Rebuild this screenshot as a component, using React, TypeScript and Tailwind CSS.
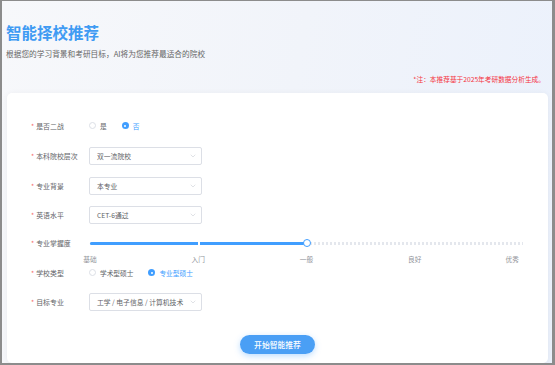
import { ChevronDown } from 'lucide-react';

const FONT = { fontFamily: '"Noto Sans CJK SC", "Noto Sans", sans-serif' };

function Label({ text }: { text: string }) {
  return (
    <div className="w-[58px] shrink-0 flex items-center text-[6.9px] text-[#606266]">
      <span className="text-[#f56c6c] mr-[2px]">*</span>
      {text}
    </div>
  );
}

function Select({ value }: { value: string }) {
  return (
    <div className="w-[113px] h-[18px] border border-[#dcdfe6] rounded-[2px] bg-white flex items-center justify-between pl-[7px] pr-[4px] text-[6.8px] text-[#606266]">
      <span>{value}</span>
      <ChevronDown size={8} strokeWidth={1.5} color="#c0c4cc" />
    </div>
  );
}

function Radio({ label, checked }: { label: string; checked?: boolean }) {
  return (
    <div className="flex items-center mr-[15px]">
      {checked ? (
        <span className="w-[7px] h-[7px] rounded-full bg-[#409eff] flex items-center justify-center">
          <span className="w-[2.5px] h-[2.5px] rounded-full bg-white" />
        </span>
      ) : (
        <span className="w-[7px] h-[7px] rounded-full border border-[#dcdfe6] bg-white" />
      )}
      <span className={`ml-[4px] text-[6.7px] ${checked ? 'text-[#409eff]' : 'text-[#606266]'}`}>{label}</span>
    </div>
  );
}

const MARKS = [
  { label: '基础', left: '0%' },
  { label: '入门', left: '25%' },
  { label: '一般', left: '50%' },
  { label: '良好', left: '75%' },
  { label: '优秀', left: '97.5%' },
];

export default function App() {
  return (
    <div
      style={FONT}
      className="w-[555px] h-[365px] overflow-hidden border-l-2 border-r-[3px] border-t border-b-2 border-[#8c8c8c] bg-[linear-gradient(100deg,#f7f8fb_0%,#f1f4fa_50%,#ebf1fc_100%)] flex flex-col"
    >
      <div className="pl-[4px] pt-[21px]">
        <h1 className="text-[15.5px] leading-[20px] font-bold text-[#3f9bf3]">智能择校推荐</h1>
        <p className="mt-[7px] text-[7.7px] leading-[10px] text-[#666]">根据您的学习背景和考研目标，AI将为您推荐最适合的院校</p>
      </div>
      <p className="mt-[15px] pr-[7px] text-right text-[6.7px] leading-[10px] text-[#f5333f]">*注：本推荐基于2025年考研数据分析生成。</p>

      <div className="mt-[9px] ml-[5px] mr-[4px] flex-1 bg-white rounded-[5px] shadow-[0_1px_6px_rgba(0,0,0,0.06)] pl-[24px] pt-[24px]">
        <div className="flex h-[18px] items-center">
          <Label text="是否二战" />
          <Radio label="是" />
          <Radio label="否" checked />
        </div>
        <div className="flex h-[18px] items-center mt-[12px]">
          <Label text="本科院校层次" />
          <Select value="双一流院校" />
        </div>
        <div className="flex h-[18px] items-center mt-[12px]">
          <Label text="专业背景" />
          <Select value="本专业" />
        </div>
        <div className="flex h-[18px] items-center mt-[11px]">
          <Label text="英语水平" />
          <Select value="CET-6通过" />
        </div>
        <div className="flex h-[18px] items-center mt-[10px]">
          <Label text="专业掌握度" />
          <div className="relative w-[433px] ml-[1px] h-[18px]">
            <div className="absolute left-0 right-0 top-[7.5px] h-[3px] bg-[repeating-linear-gradient(90deg,#e4e7ed_0_2px,transparent_2px_4px)]" />
            <div className="absolute left-0 w-1/2 top-[7.5px] h-[3px] bg-[#409eff] rounded-l-full" />
            <div className="absolute left-1/4 top-[7.5px] h-[3px] w-[2px] bg-white" />
            <div className="absolute left-1/2 top-[5px] -translate-x-1/2 w-[8px] h-[8px] rounded-full border-[1.5px] border-[#409eff] bg-white" />
            {MARKS.map(m => (
              <span
                key={m.label}
                style={{ left: m.left }}
                className="absolute top-[20px] -translate-x-1/2 text-[6.7px] leading-[10px] text-[#909399] whitespace-nowrap"
              >
                {m.label}
              </span>
            ))}
          </div>
        </div>
        <div className="flex h-[18px] items-center mt-[12px]">
          <Label text="学校类型" />
          <Radio label="学术型硕士" />
          <Radio label="专业型硕士" checked />
        </div>
        <div className="flex h-[18px] items-center mt-[11px]">
          <Label text="目标专业" />
          <Select value="工学 / 电子信息 / 计算机技术" />
        </div>
        <div className="flex justify-center mt-[24px] -ml-[24px]">
          <button className="w-[75px] h-[19px] rounded-full bg-[#4a9ff5] text-white text-[7.8px] font-medium shadow-[0_2px_6px_rgba(64,158,255,0.35)]">
            开始智能推荐
          </button>
        </div>
      </div>
    </div>
  );
}
